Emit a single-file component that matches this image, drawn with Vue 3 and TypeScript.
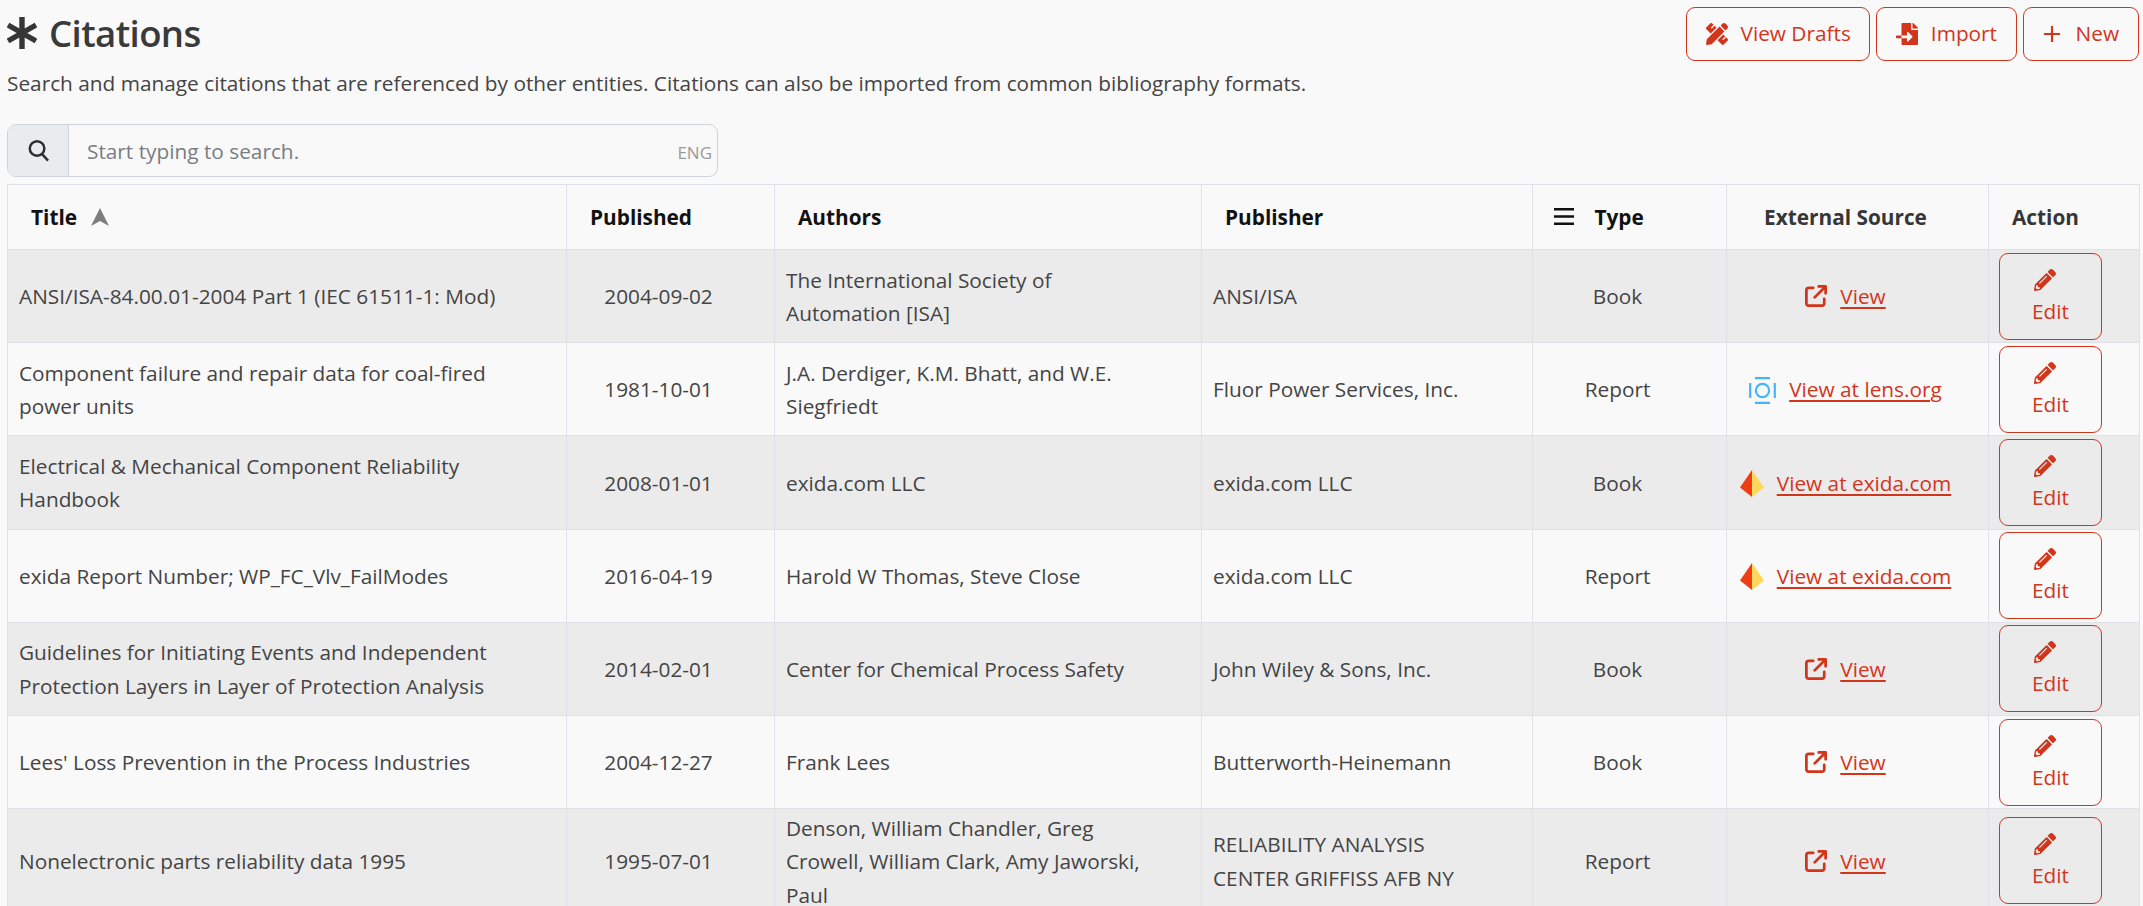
<script setup lang="ts">
interface Row {
  title: string
  date: string
  authors: string
  publisher: string
  type: string
  link: string
  icon: 'ext' | 'lens' | 'exida'
}

const rows: Row[] = [
  { title: 'ANSI/ISA-84.00.01-2004 Part 1 (IEC 61511-1: Mod)', date: '2004-09-02', authors: 'The International Society of\nAutomation [ISA]', publisher: 'ANSI/ISA', type: 'Book', link: 'View', icon: 'ext' },
  { title: 'Component failure and repair data for coal-fired\npower units', date: '1981-10-01', authors: 'J.A. Derdiger, K.M. Bhatt, and W.E.\nSiegfriedt', publisher: 'Fluor Power Services, Inc.', type: 'Report', link: 'View at lens.org', icon: 'lens' },
  { title: 'Electrical & Mechanical Component Reliability\nHandbook', date: '2008-01-01', authors: 'exida.com LLC', publisher: 'exida.com LLC', type: 'Book', link: 'View at exida.com', icon: 'exida' },
  { title: 'exida Report Number; WP_FC_Vlv_FailModes', date: '2016-04-19', authors: 'Harold W Thomas, Steve Close', publisher: 'exida.com LLC', type: 'Report', link: 'View at exida.com', icon: 'exida' },
  { title: 'Guidelines for Initiating Events and Independent\nProtection Layers in Layer of Protection Analysis', date: '2014-02-01', authors: 'Center for Chemical Process Safety', publisher: 'John Wiley & Sons, Inc.', type: 'Book', link: 'View', icon: 'ext' },
  { title: "Lees' Loss Prevention in the Process Industries", date: '2004-12-27', authors: 'Frank Lees', publisher: 'Butterworth-Heinemann', type: 'Book', link: 'View', icon: 'ext' },
  { title: 'Nonelectronic parts reliability data 1995', date: '1995-07-01', authors: 'Denson, William Chandler, Greg\nCrowell, William Clark, Amy Jaworski,\nPaul', publisher: 'RELIABILITY ANALYSIS\nCENTER GRIFFISS AFB NY', type: 'Report', link: 'View', icon: 'ext' },
]
</script>

<template>
  <div class="page">
    <header class="head">
      <div class="title-block">
        <h1 class="title">
          <svg class="asterisk" viewBox="0 0 30 32" aria-hidden="true">
            <path d="M15 0v32M1 8l28 16M29 8L1 24" />
          </svg>
          <span>Citations</span>
        </h1>
        <p class="desc">Search and manage citations that are referenced by other entities. Citations can also be imported from common bibliography formats.</p>
      </div>
      <div class="actions">
        <button class="btn btn-drafts">
          <svg class="btn-icon" viewBox="0 0 512 512"><path d="M109.46 244.04l134.58-134.56-44.12-44.12-61.68 61.68a7.919 7.919 0 0 1-11.21 0l-11.21-11.21c-3.1-3.1-3.1-8.12 0-11.21l61.68-61.68-33.64-33.65C131.47-3.1 111.39-3.1 99 9.29L9.29 99c-12.38 12.39-12.39 32.47 0 44.86l100.17 100.18zm388.47-116.8c18.76-18.76 18.75-49.17 0-67.93l-45.25-45.25c-18.76-18.76-49.18-18.76-67.95 0l-46.02 46.01 113.2 113.2 46.02-46.03zM316.08 82.71l-297 296.96L.32 487.11c-2.53 14.49 10.09 27.11 24.59 24.56l107.45-18.84L429.28 195.9 316.08 82.71zm186.63 285.43l-33.64-33.64-61.68 61.68c-3.1 3.1-8.12 3.1-11.21 0l-11.21-11.21c-3.1-3.1-3.1-8.12 0-11.21l61.68-61.68-44.14-44.14L267.93 402.5l100.21 100.2c12.39 12.39 32.47 12.39 44.86 0l89.71-89.7c12.38-12.39 12.38-32.47 0-44.86z" /></svg>
          View Drafts
        </button>
        <button class="btn btn-import">
          <svg class="btn-icon" viewBox="0 0 512 512"><path d="M16 288c-8.8 0-16 7.2-16 16v32c0 8.8 7.2 16 16 16h112v-64zm489-183L407.1 7c-4.5-4.5-10.6-7-17-7H384v128h128v-6.1c0-6.3-2.5-12.4-7-16.9zm-153 31V0H152c-13.3 0-24 10.7-24 24v264h128v-65.2c0-14.3 17.3-21.4 27.4-11.3L379 308c6.6 6.7 6.6 17.4 0 24l-95.7 96.4c-10.1 10.1-27.4 3-27.4-11.3V352H128v136c0 13.3 10.7 24 24 24h336c13.3 0 24-10.7 24-24V160H376c-13.2 0-24-10.8-24-24z" /></svg>
          Import
        </button>
        <button class="btn btn-new">
          <svg class="btn-icon plus" viewBox="0 0 20 20"><path d="M10 1v18M1 10h18" /></svg>
          New
        </button>
      </div>
    </header>

    <div class="search">
      <span class="search-addon">
        <svg class="search-icon" viewBox="0 0 24 24"><circle cx="10.5" cy="10" r="7.6" /><path d="M16 16l6 6.5" /></svg>
      </span>
      <span class="search-input">
        <span class="placeholder">Start typing to search.</span>
        <span class="lang">ENG</span>
      </span>
    </div>

    <table class="grid">
      <colgroup>
        <col class="c1" /><col class="c2" /><col class="c3" /><col class="c4" /><col class="c5" /><col class="c6" /><col class="c7" />
      </colgroup>
      <thead>
        <tr>
          <th class="black">Title
            <svg class="sort" viewBox="0 0 20 18"><path d="M10 0l9 18-9-5-9 5z" /></svg>
          </th>
          <th class="black">Published</th>
          <th class="black">Authors</th>
          <th class="black">Publisher</th>
          <th class="black type-h">
            <svg class="bars" viewBox="0 0 20 17"><path d="M0 1.2h20M0 8.5h20M0 15.8h20" /></svg>
            Type
          </th>
          <th class="center-h">External Source</th>
          <th>Action</th>
        </tr>
      </thead>
      <tbody>
        <tr v-for="r in rows" :key="r.title">
          <td class="multi">{{ r.title }}</td>
          <td class="center">{{ r.date }}</td>
          <td class="multi">{{ r.authors }}</td>
          <td class="multi">{{ r.publisher }}</td>
          <td class="center">{{ r.type }}</td>
          <td class="center">
            <span class="source">
              <svg v-if="r.icon === 'ext'" class="ext" viewBox="0 0 512 512"><path d="M320 0c-17.7 0-32 14.3-32 32s14.3 32 32 32h82.7L201.4 265.4c-12.5 12.5-12.5 32.8 0 45.3s32.8 12.5 45.3 0L448 109.3V192c0 17.7 14.3 32 32 32s32-14.3 32-32V32c0-17.7-14.3-32-32-32H320zM80 32C35.8 32 0 67.8 0 112V432c0 44.2 35.8 80 80 80H400c44.2 0 80-35.8 80-80V320c0-17.7-14.3-32-32-32s-32 14.3-32 32V432c0 8.8-7.2 16-16 16H80c-8.8 0-16-7.2-16-16V112c0-8.8 7.2-16 16-16H192c17.7 0 32-14.3 32-32s-14.3-32-32-32H80z" /></svg>
              <svg v-else-if="r.icon === 'lens'" class="lens" viewBox="0 0 27 27"><path d="M6 1.2h15M6 25.8h15M1.2 6v15M25.8 6v15" /><circle cx="13.5" cy="13.5" r="6.6" /></svg>
              <svg v-else class="exida" viewBox="0 0 24 27"><path fill="#ee3e14" d="M12 0v27L0 17.5z" /><path fill="#fdd85c" d="M12 0v27l12-9.5z" /></svg>
              <a class="link">{{ r.link }}</a>
            </span>
          </td>
          <td class="edit-cell">
            <button class="edit">
              <svg class="pencil" viewBox="0 0 512 512"><path d="M497.9 142.1l-46.1 46.1c-4.7 4.7-12.3 4.7-17 0l-111-111c-4.7-4.7-4.7-12.3 0-17l46.1-46.1c18.7-18.7 49.1-18.7 67.9 0l60.1 60.1c18.8 18.7 18.8 49.1 0 67.9zM284.2 99.8L21.6 362.4.4 483.9c-2.9 16.4 11.4 30.6 27.8 27.8l121.5-21.3 262.6-262.6c4.7-4.7 4.7-12.3 0-17l-111-111c-4.8-4.7-12.4-4.7-17.1 0zM124.1 339.9c-5.5-5.5-5.5-14.3 0-19.8l154-154c5.5-5.5 14.3-5.5 19.8 0s5.5 14.3 0 19.8l-154 154c-5.5 5.5-14.3 5.5-19.8 0zM88 424h48v36.3l-64.5 11.3-31.1-31.1L51.7 376H88v48z" /></svg>
              <span>Edit</span>
            </button>
          </td>
        </tr>
      </tbody>
    </table>
  </div>
</template>

<style>
html, body { background: #f9f9f9; overflow: hidden; }
</style>

<style scoped>
.page {
  box-sizing: border-box;
  width: 2143px;
  height: 906px;
  overflow: hidden;
  padding: 0 4px 0 7px;
  background: #f9f9f9;
  color: #444;
  font-family: "Open Sans", "Noto Sans", sans-serif;
  font-size: 20.8px;
  line-height: 33.6px;
}
.head {
  display: flex;
  justify-content: space-between;
  align-items: flex-start;
  height: 124px;
}
.title {
  display: flex;
  align-items: center;
  gap: 12px;
  margin: 13px 0 0;
  height: 40px;
  font-size: 36.6px;
  line-height: 40px;
  font-weight: 600;
  letter-spacing: -0.6px;
  color: #3a3a3a;
}
.asterisk {
  width: 30px;
  height: 32px;
  fill: none;
  stroke: #363636;
  stroke-width: 5.4;
}
.desc {
  margin: 14px 0 0;
}
.actions {
  display: flex;
  gap: 6px;
  padding-top: 7px;
}
.btn {
  display: flex;
  align-items: center;
  gap: 14px;
  box-sizing: border-box;
  height: 54px;
  padding: 0 18.5px;
  border: 1px solid #d3351b;
  border-radius: 9px;
  background: transparent;
  color: #d3351b;
  font: inherit;
}
.btn-drafts { gap: 13px; }
.btn-import { gap: 13px; }
.btn-new { gap: 15px; padding: 0 19px; }
.btn-icon {
  width: 22px;
  height: 22px;
  fill: #d3351b;
}
.btn-icon.plus {
  width: 18px;
  height: 18px;
  fill: none;
  stroke: #d3351b;
  stroke-width: 2.4;
}
.search {
  display: flex;
  box-sizing: border-box;
  width: 711px;
  height: 53px;
  border: 1px solid #ced4da;
  border-radius: 9px;
  overflow: hidden;
}
.search-addon {
  display: flex;
  align-items: center;
  justify-content: center;
  width: 60px;
  background: #e9ecef;
  border-right: 1px solid #ced4da;
}
.search-icon {
  width: 23px;
  height: 23px;
  fill: none;
  stroke: #2b2f33;
  stroke-width: 2.6;
}
.search-input {
  flex: 1;
  display: flex;
  align-items: center;
  justify-content: space-between;
  padding: 2px 5px 0 18px;
}
.placeholder {
  color: #777d84;
}
.lang {
  font-size: 17px;
  color: #9a9a9a;
  padding-top: 3px;
}
.grid {
  width: 2132px;
  margin-top: 7px;
  table-layout: fixed;
  border-collapse: collapse;
}
.c1 { width: 559px; }
.c2 { width: 208px; }
.c3 { width: 427px; }
.c4 { width: 331px; }
.c5 { width: 194px; }
.c6 { width: 262px; }
.c7 { width: 151px; }
th, td {
  border: 1px solid #e0e1e6;
  box-sizing: border-box;
}
th {
  height: 65px;
  padding: 1px 23px 0;
  text-align: left;
  font-weight: 700;
  color: #363636;
  vertical-align: middle;
}
th.black { color: #111; }
th.type-h { padding-left: 21px; }
th.center-h { text-align: center; padding-right: 47px; }
td {
  padding: 2.4px 11px 0.4px;
  vertical-align: middle;
}
tbody tr:nth-child(odd) td { background: #ebebeb; }
.multi { white-space: pre-line; }
td.center {
  text-align: center;
  padding-right: 35px;
}
.sort {
  width: 20px;
  height: 18px;
  margin-left: 8px;
  fill: #7d7d7d;
  vertical-align: -1px;
}
.bars {
  width: 20px;
  height: 17px;
  margin-right: 15px;
  fill: none;
  stroke: #111;
  stroke-width: 2.4;
  vertical-align: 0;
}
.source {
  display: flex;
  justify-content: center;
  align-items: center;
  gap: 13px;
}
.source svg { flex-shrink: 0; }
.ext {
  width: 22px;
  height: 22px;
  fill: #d3351b;
  margin-top: -2px;
}
.lens {
  width: 27px;
  height: 27px;
  fill: none;
  stroke: #45b4fa;
  stroke-width: 2.2;
}
.exida {
  width: 24px;
  height: 27px;
}
.link {
  color: #d3351b;
  text-decoration: underline;
  text-decoration-thickness: 2px;
  text-underline-offset: 3px;
}
td.edit-cell {
  padding: 2.6px 10px;
}
.edit {
  display: flex;
  flex-direction: column;
  align-items: center;
  justify-content: flex-start;
  gap: 4px;
  box-sizing: border-box;
  width: 103px;
  height: 87px;
  padding: 15px 0 0;
  border: 1px solid #d3351b;
  border-radius: 9px;
  background: transparent;
  color: #d3351b;
  font: inherit;
}
.pencil {
  width: 22px;
  height: 22px;
  fill: #d3351b;
  margin-left: -11px;
}
</style>
